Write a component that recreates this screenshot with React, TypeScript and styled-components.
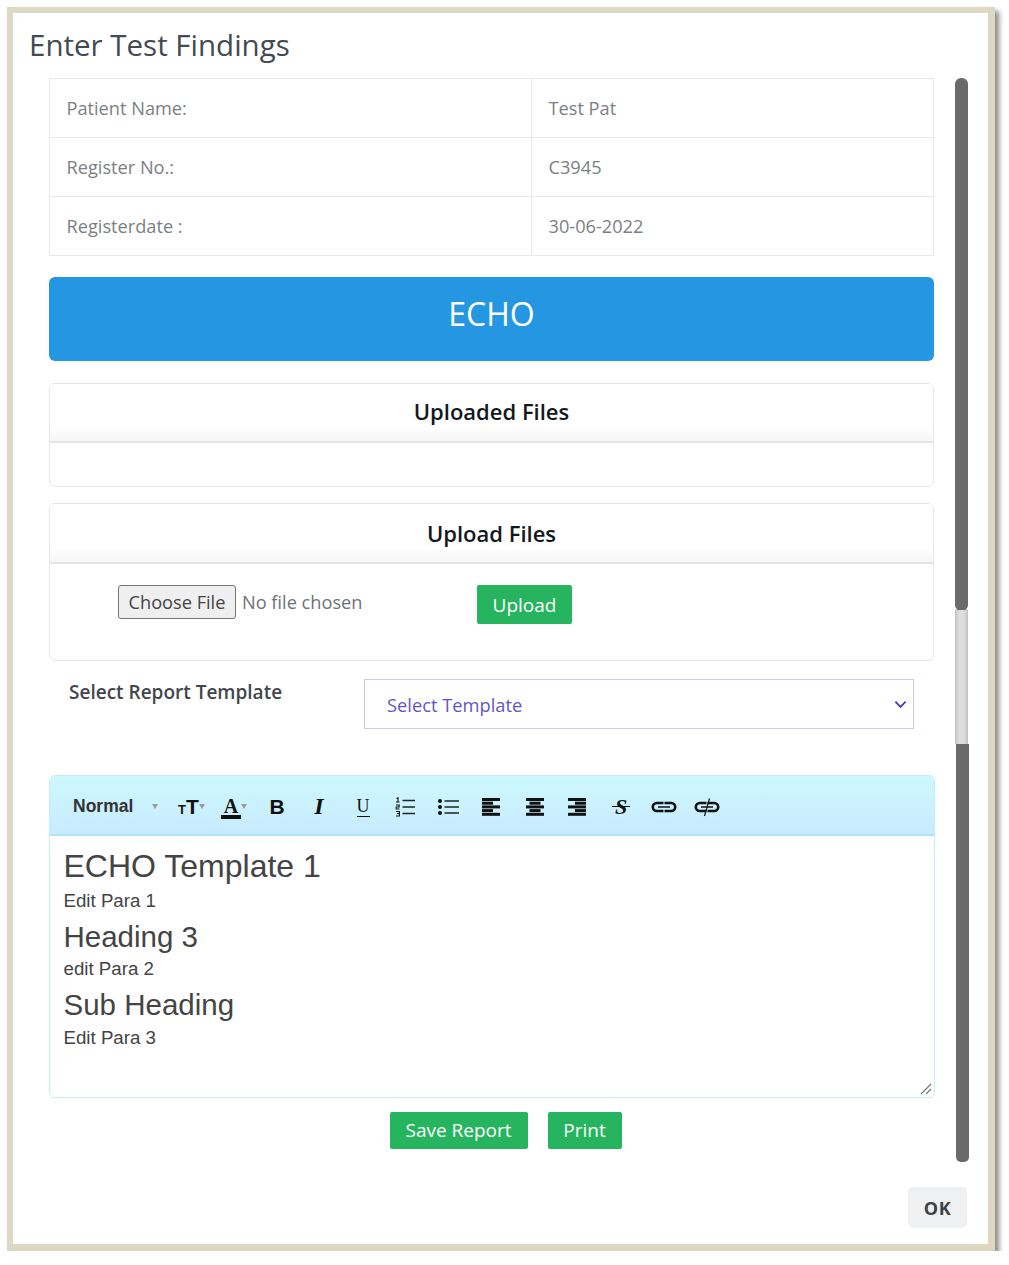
import React, { ReactElement } from "react";
import styled, { createGlobalStyle } from "styled-components";

const GlobalStyle = createGlobalStyle`
  html, body {
    margin: 0;
    padding: 0;
    background: #fff;
    font-family: "Open Sans", "Liberation Sans", sans-serif;
  }
  * {
    box-sizing: border-box;
  }
`;

const patientRows = [
  ["Patient Name:", "Test Pat"],
  ["Register No.:", "C3945"],
  ["Registerdate :", "30-06-2022"],
];

function Lines({ kind }: { kind: "left" | "center" | "right" }): ReactElement {
  const widths = [18, 11, 18, 11, 18];
  return (
    <svg width="18" height="18" viewBox="0 0 18 18">
      {widths.map((w, i) => {
        const x = kind === "left" ? 0 : kind === "right" ? 18 - w : (18 - w) / 2;
        return <rect key={i} x={x} y={i * 3.7} width={w} height="3" fill="#111" />;
      })}
    </svg>
  );
}

function OrderedList(): ReactElement {
  return (
    <svg width="20" height="20" viewBox="0 0 20 20">
      <path d="M7.5 3.5H20M7.5 10H20M7.5 16.5H20" stroke="#222" strokeWidth="1.5" />
      <path
        d="M1.5 1.5L3 .8V5M1 5H4.5M1 8H4.2V10H1.2V12H4.5M1 14.5H4.4V16.5H2M4.4 16.5V19H1"
        stroke="#111"
        strokeWidth="1.1"
        fill="none"
      />
    </svg>
  );
}

function BulletList(): ReactElement {
  return (
    <svg width="21" height="18" viewBox="0 0 21 18">
      <path d="M6.5 3H21M6.5 9H21M6.5 15H21" stroke="#222" strokeWidth="1.5" />
      <circle cx="2" cy="3" r="2" fill="#111" />
      <circle cx="2" cy="9" r="2" fill="#111" />
      <circle cx="2" cy="15" r="2" fill="#111" />
    </svg>
  );
}

function Chain({ broken }: { broken?: boolean }): ReactElement {
  return (
    <svg width="26" height="20" viewBox="0 0 26 20">
      <path
        d="M12.5 6H5.8a4 4 0 0 0 0 8h6.7M13.5 6h6.7a4 4 0 0 1 0 8h-6.7"
        fill="none"
        stroke="#111"
        strokeWidth="2.6"
      />
      <path d="M7 10h12" stroke="#111" strokeWidth="1.6" />
      {broken && <path d="M15.5 1.5L10.5 19" stroke="#111" strokeWidth="1.2" />}
    </svg>
  );
}

export default function App(): ReactElement {
  return (
    <>
      <GlobalStyle />
      <Frame>
        <Title>Enter Test Findings</Title>
        <Body>
          <Content>
            <InfoTable>
              <tbody>
                {patientRows.map(([label, value]) => (
                  <tr key={label}>
                    <InfoCell>{label}</InfoCell>
                    <InfoCell>{value}</InfoCell>
                  </tr>
                ))}
              </tbody>
            </InfoTable>

            <Banner>ECHO</Banner>

            <Card>
              <CardHeader>Uploaded Files</CardHeader>
              <EmptyBody />
            </Card>

            <Card>
              <CardHeader $tall>Upload Files</CardHeader>
              <UploadBody>
                <FileInput type="file" />
                <UploadButton>Upload</UploadButton>
              </UploadBody>
            </Card>

            <TemplateRow>
              <TemplateLabel>Select Report Template</TemplateLabel>
              <SelectWrap>
                <TemplateSelect defaultValue="">
                  <option value="">Select Template</option>
                </TemplateSelect>
                <SelectChevron viewBox="0 0 14 9">
                  <path d="M1.5 1.5L7 7l5.5-5.5" fill="none" stroke="#4a3bb0" strokeWidth="2" />
                </SelectChevron>
              </SelectWrap>
            </TemplateRow>

            <Editor>
              <Toolbar>
                <FormatLabel>Normal</FormatLabel>
                <Caret $gap={18} />
                <ToolSlot $width={25} $left={21}>
                  <SmallT>T</SmallT>
                  <BigT>T</BigT>
                  <Caret $gap={0} />
                </ToolSlot>
                <ToolSlot $width={26} $left={17}>
                  <ColorA>A</ColorA>
                  <Caret $gap={0} />
                </ToolSlot>
                <ToolSlot $width={14} $left={23}>
                  <BoldGlyph>B</BoldGlyph>
                </ToolSlot>
                <ToolSlot $width={14} $left={28}>
                  <ItalicGlyph>I</ItalicGlyph>
                </ToolSlot>
                <ToolSlot $width={12} $left={31}>
                  <UnderGlyph>U</UnderGlyph>
                </ToolSlot>
                <ToolSlot $width={20} $left={26}>
                  <OrderedList />
                </ToolSlot>
                <ToolSlot $width={21} $left={23}>
                  <BulletList />
                </ToolSlot>
                <ToolSlot $width={18} $left={23}>
                  <Lines kind="left" />
                </ToolSlot>
                <ToolSlot $width={18} $left={26}>
                  <Lines kind="center" />
                </ToolSlot>
                <ToolSlot $width={18} $left={24}>
                  <Lines kind="right" />
                </ToolSlot>
                <ToolSlot $width={16} $left={27}>
                  <StrikeGlyph>S</StrikeGlyph>
                </ToolSlot>
                <ToolSlot $width={26} $left={22}>
                  <Chain />
                </ToolSlot>
                <ToolSlot $width={26} $left={17}>
                  <Chain broken />
                </ToolSlot>
              </Toolbar>
              <EditorBody>
                <EditorHeading $large>ECHO Template 1</EditorHeading>
                <EditorPara $top={2} $bottom={3}>
                  Edit Para 1
                </EditorPara>
                <EditorHeading>Heading 3</EditorHeading>
                <EditorPara $top={-1} $bottom={3}>
                  edit Para 2
                </EditorPara>
                <EditorHeading>Sub Heading</EditorHeading>
                <EditorPara $top={0} $bottom={0}>
                  Edit Para 3
                </EditorPara>
                <Grip viewBox="0 0 12 12">
                  <path d="M1 11L11 1M6 11L11 6" stroke="#777" strokeWidth="1.2" />
                </Grip>
              </EditorBody>
            </Editor>

            <Actions>
              <ActionButton $width={138}>Save Report</ActionButton>
              <ActionButton $width={74}>Print</ActionButton>
            </Actions>
          </Content>

          <Scrollbar>
            <TopThumb />
            <ScrollTrack />
            <BottomThumb />
          </Scrollbar>
        </Body>
        <Footer>
          <OkButton>OK</OkButton>
        </Footer>
      </Frame>
    </>
  );
}

const Frame = styled.div`
  width: 988px;
  height: 1244px;
  margin: 7px 0 0 7px;
  border-style: solid;
  border-color: #ddd8c1;
  border-width: 6px 7px 7px 6px;
  box-shadow: 4px 4px 5px #8a8a8a;
  background: #fff;
  display: flex;
  flex-direction: column;
`;

const Title = styled.h1`
  margin: 0;
  padding: 10px 0 0 16px;
  height: 65px;
  font-size: 29.5px;
  line-height: 44px;
  font-weight: 400;
  color: #434a52;
`;

const Body = styled.div`
  display: flex;
  align-items: flex-start;
  height: 1084px;
  padding-left: 36px;
`;

const Content = styled.div`
  width: 887px;
  display: flex;
  flex-direction: column;
`;

const InfoTable = styled.table`
  width: 885px;
  border-collapse: collapse;
  table-layout: fixed;
`;

const InfoCell = styled.td`
  height: 59px;
  padding: 0 0 0 16.5px;
  border: 1px solid #e6eaee;
  font-size: 18.2px;
  color: #7b7f84;

  &:first-child {
    width: 482px;
  }
`;

const Banner = styled.div`
  width: 885px;
  height: 84px;
  margin-top: 21px;
  padding-top: 15px;
  border-radius: 6px;
  background: #2596e2;
  color: #fff;
  font-size: 32px;
  line-height: 44px;
  text-align: center;
`;

const Card = styled.section`
  width: 885px;
  margin-top: 22px;
  border: 1.5px solid #e6e7e9;
  border-radius: 6px;
  overflow: hidden;

  & + & {
    margin-top: 16px;
  }
`;

const CardHeader = styled.div<{ $tall?: boolean }>`
  height: ${(p) => (p.$tall ? 60 : 59)}px;
  border-bottom: 2px solid #e3e4e6;
  background: linear-gradient(#fff 75%, #f6f6f6);
  color: #14181c;
  font-size: 22px;
  font-weight: 600;
  line-height: ${(p) => (p.$tall ? 58 : 54)}px;
  text-align: center;
`;

const EmptyBody = styled.div`
  height: 43px;
`;

const UploadBody = styled.div`
  height: 96px;
  padding: 21px 0 0 68px;
  display: flex;
  align-items: flex-start;
`;

const FileInput = styled.input`
  width: 360px;
  height: 34px;
  font-family: "Open Sans", sans-serif;
  font-size: 18.2px;
  color: #6f7377;

  &::file-selector-button {
    width: 118px;
    height: 34px;
    margin-right: 6px;
    padding: 0;
    border: 1px solid #767676;
    border-radius: 3px;
    background: #efefef;
    color: #444;
    font-family: "Open Sans", sans-serif;
    font-size: 18.2px;
  }
`;

const GreenButton = styled.button`
  border: none;
  border-radius: 2px;
  background: #26b45f;
  color: #fff;
  font-family: "Open Sans", sans-serif;
  font-size: 19px;
  font-weight: 500;
  padding: 0;
`;

const UploadButton = styled(GreenButton)`
  width: 95px;
  height: 39px;
  margin-left: -1px;
`;

const TemplateRow = styled.div`
  display: flex;
  align-items: flex-start;
  margin-top: 18px;
  padding-left: 20px;
`;

const TemplateLabel = styled.label`
  width: 295px;
  color: #42464b;
  font-size: 19px;
  line-height: 26px;
  font-weight: 600;
`;

const SelectWrap = styled.div`
  position: relative;
  width: 550px;
`;

const TemplateSelect = styled.select`
  width: 100%;
  height: 50px;
  padding: 0 0 0 22px;
  appearance: none;
  border: 1.5px solid #cdcbec;
  border-radius: 0;
  background: #fff;
  color: #6455c6;
  font-family: "Open Sans", sans-serif;
  font-size: 18.3px;
`;

const SelectChevron = styled.svg`
  position: absolute;
  right: 7px;
  top: 21px;
  width: 13px;
  height: 9px;
`;

const Editor = styled.div`
  width: 886px;
  height: 323px;
  margin-top: 46px;
  border: 1.5px solid #c4ecfb;
  border-radius: 6px;
  overflow: hidden;
  display: flex;
  flex-direction: column;
`;

const Toolbar = styled.div`
  height: 60px;
  flex: none;
  padding: 3px 0 0 23px;
  display: flex;
  align-items: center;
  border-bottom: 2px solid #aee2fb;
  background: linear-gradient(#cdf8ff, #c8ebfe);
`;

const FormatLabel = styled.span`
  width: 61px;
  color: #333;
  font-family: "Liberation Sans", sans-serif;
  font-size: 17.5px;
  font-weight: 700;
`;

const Caret = styled.i<{ $gap: number }>`
  flex: none;
  width: 0;
  height: 0;
  margin-left: ${(p) => p.$gap}px;
  border-left: 3.5px solid transparent;
  border-right: 3.5px solid transparent;
  border-top: 5px solid #9b9b9b;
`;

const ToolSlot = styled.span<{ $width: number; $left: number }>`
  flex: none;
  width: ${(p) => p.$width}px;
  margin-left: ${(p) => p.$left}px;
  height: 24px;
  display: flex;
  align-items: center;
  justify-content: center;
  font-family: "Liberation Serif", serif;
  color: #111;
`;

const SmallT = styled.span`
  font-family: "Liberation Sans", sans-serif;
  font-weight: 700;
  font-size: 13px;
  margin-top: 6px;
`;

const BigT = styled.span`
  font-family: "Liberation Sans", sans-serif;
  font-weight: 700;
  font-size: 21px;
`;

const ColorA = styled.span`
  font-size: 20px;
  font-weight: 700;
  line-height: 18px;
  border-bottom: 4px solid #111;
  padding: 0 3px;
  margin-top: 2px;
`;

const BoldGlyph = styled.span`
  font-family: "Liberation Sans", sans-serif;
  font-size: 21px;
  font-weight: 700;
`;

const ItalicGlyph = styled.span`
  font-size: 24px;
  font-weight: 700;
  font-style: italic;
`;

const UnderGlyph = styled.span`
  font-size: 18px;
  line-height: 19px;
  border-bottom: 1.5px solid #111;
`;

const StrikeGlyph = styled.span`
  position: relative;
  font-size: 22px;
  font-style: italic;
  font-weight: 700;

  &::after {
    content: "";
    position: absolute;
    left: -3px;
    right: -3px;
    top: 12px;
    height: 1.5px;
    background: #111;
  }
`;

const EditorBody = styled.div`
  position: relative;
  flex: 1;
  padding: 9.5px 13.5px 0;
  font-family: "Liberation Sans", sans-serif;
  color: #444;
`;

const EditorHeading = styled.div<{ $large?: boolean }>`
  font-size: ${(p) => (p.$large ? 32 : 29.5)}px;
  line-height: 40px;
`;

const EditorPara = styled.div<{ $top: number; $bottom: number }>`
  margin: ${(p) => p.$top}px 0 ${(p) => p.$bottom}px;
  font-size: 18.7px;
  line-height: 26px;
`;

const Grip = styled.svg`
  position: absolute;
  right: 2px;
  bottom: 2px;
  width: 12px;
  height: 12px;
`;

const Actions = styled.div`
  display: flex;
  justify-content: center;
  gap: 20px;
  margin-top: 14px;
  padding-left: 26px;
`;

const ActionButton = styled(GreenButton)<{ $width: number }>`
  width: ${(p) => p.$width}px;
  height: 37px;
  padding-bottom: 2px;
`;

const Scrollbar = styled.div`
  width: 14px;
  height: 1084px;
  margin-left: 19px;
  display: flex;
  flex-direction: column;
`;

const TopThumb = styled.div`
  height: 533px;
  width: 13px;
  border-radius: 6px;
  background: #6a6a6a;
`;

const ScrollTrack = styled.div`
  height: 134px;
  width: 13px;
  margin-top: -1px;
  background: linear-gradient(90deg, #c0c0c0, #dedede 30%, #dcdcdc 70%, #c0c0c0);
`;

const BottomThumb = styled.div`
  height: 418px;
  width: 13px;
  margin-left: 1px;
  border-radius: 0 0 5px 5px;
  background: #6a6a6a;
`;

const Footer = styled.div`
  display: flex;
  justify-content: flex-end;
  padding: 25px 21px 0 0;
`;

const OkButton = styled.button`
  width: 59px;
  height: 41px;
  border: none;
  border-radius: 5px;
  background: #eef0f2;
  color: #3d4145;
  font-family: "Open Sans", sans-serif;
  font-size: 18px;
  font-weight: 700;
  letter-spacing: 0.5px;
  padding: 0;
`;
